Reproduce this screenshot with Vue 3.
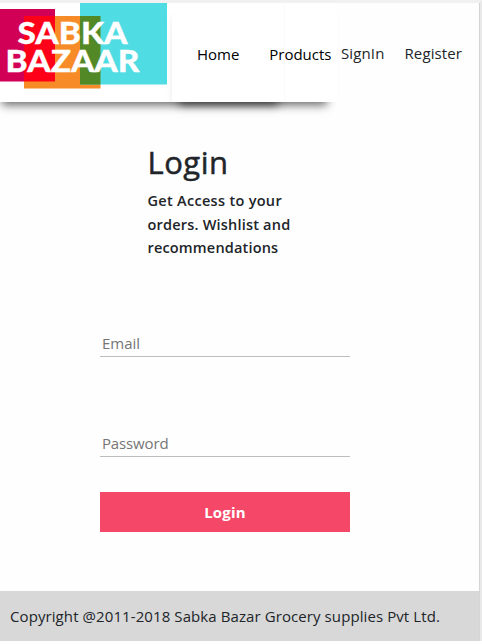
<script setup>
const links = [
  { label: 'Home', name: 'home' },
  { label: 'Products', name: 'products' },
]
const account = [
  { label: 'SignIn', name: 'signin' },
  { label: 'Register', name: 'register' },
]
const intro = ['Get Access to your', 'orders. Wishlist and', 'recommendations']
</script>

<template>
  <div class="page">
    <header class="header">
      <div class="brand-bar">
        <svg class="logo" width="172" height="99" viewBox="0 3 172 99">
          <rect x="0" y="9" width="55" height="72.5" fill="#d10056" />
          <rect x="24" y="16" width="76.5" height="72.5" fill="#f78b27" />
          <rect x="24" y="16" width="31" height="65.5" fill="#ff0019" />
          <rect x="80" y="3" width="87" height="81.5" fill="#50dce3" />
          <rect x="80" y="16" width="20.5" height="68.5" fill="#528825" />
          <text x="17.5" y="43.5" textLength="110" lengthAdjust="spacingAndGlyphs">SABKA</text>
          <text x="5.5" y="72.3" textLength="134" lengthAdjust="spacingAndGlyphs">BAZAAR</text>
        </svg>
        <nav class="links">
          <a v-for="l in links" :key="l.name" :class="['link', l.name]"><span>{{ l.label }}</span></a>
        </nav>
      </div>
      <div class="account">
        <a v-for="a in account" :key="a.name" :class="a.name">{{ a.label }}</a>
      </div>
    </header>

    <main class="main">
      <section class="intro">
        <h1>Login</h1>
        <p><span v-for="(line, i) in intro" :key="i" :class="'line' + i">{{ line }}</span></p>
      </section>
      <form class="form" @submit.prevent>
        <input class="email" type="email" placeholder="Email" />
        <input class="password" type="password" placeholder="Password" />
        <button type="submit">Login</button>
      </form>
    </main>

    <footer class="footer"><span>Copyright @2011-2018 Sabka Bazar Grocery supplies Pvt Ltd.</span></footer>
  </div>
</template>

<style>
body {
  background: #fefefe;
  overflow: hidden;
}
</style>

<style scoped>
.page {
  box-sizing: border-box;
  width: 482px;
  height: 641px;
  display: flex;
  flex-direction: column;
  border-top: 3px solid #f1f1f1;
  border-right: 2px solid #e9e9e9;
  box-shadow: inset -1px 0 #d4d4d4;
  padding-right: 1px;
  background: #fefefe;
  color: #212529;
  font-family: "Open Sans", "Noto Sans", sans-serif;
  font-size: 15px;
  line-height: 24px;
}
.header {
  display: flex;
  height: 99px;
}
.brand-bar {
  display: flex;
  width: 337px;
  background: #fff;
  box-shadow: -4px 9px 9px -6px #666;
}
.logo {
  display: block;
  flex: none;
}
.logo text {
  font: 900 30.5px Lato, sans-serif;
  fill: #fff;
  stroke: #fff;
  stroke-width: 0.3px;
}
.links {
  display: flex;
  flex: 1;
}
.link {
  box-sizing: border-box;
  padding-top: 39px;
  color: #000;
  white-space: nowrap;
  background: #fff;
}
.home {
  width: 113px;
  padding-left: 25px;
  border-right: 1px solid #fafafa;
  box-shadow: 0 9px 9px -7px #333;
}
.products {
  width: 52px;
  display: flex;
  justify-content: flex-end;
  padding-right: 5.5px;
}
.account {
  display: flex;
  gap: 20px;
  padding: 38px 0 0 4px;
  letter-spacing: 0.12px;
}
.main {
  flex: 1;
}
.intro {
  padding: 41px 0 0 147.5px;
}
h1 {
  margin: 0 0 8px;
  font-size: 31px;
  line-height: 38px;
  font-weight: 500;
  letter-spacing: 0.5px;
  -webkit-text-stroke: 0.5px #212529;
}
.intro p {
  margin: 0;
  display: flex;
  flex-direction: column;
  align-items: flex-start;
  font-weight: 600;
  font-size: 14.5px;
  line-height: 23.5px;
}
.line0 {
  letter-spacing: 0.3px;
}
.line1 {
  letter-spacing: 0.2px;
}
.line2 {
  letter-spacing: 0.17px;
}
.form {
  width: 250px;
  margin: 71px 0 0 100px;
  display: flex;
  flex-direction: column;
}
input {
  box-sizing: border-box;
  width: 250px;
  height: 26px;
  padding: 0 2px;
  border: 0;
  border-bottom: 1px solid #bdbdbd;
  outline: 0;
  background: transparent;
  font: inherit;
}
input::placeholder {
  color: #757575;
  opacity: 1;
}
.password {
  margin-top: 74px;
  letter-spacing: -0.15px;
}
button {
  height: 40px;
  margin-top: 35px;
  border: 0;
  background: #f54768;
  color: #fff;
  font: inherit;
  font-weight: 700;
  letter-spacing: 0.2px;
}
.footer {
  box-sizing: border-box;
  height: 50px;
  padding: 13px 10px;
  background: #d8d8d8;
  white-space: nowrap;
  letter-spacing: 0.09px;
}
</style>
